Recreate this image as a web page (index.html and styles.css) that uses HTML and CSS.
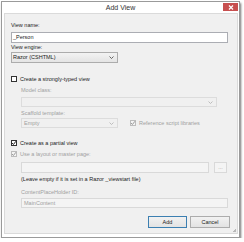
FILE: index.html
```html
<!DOCTYPE html>
<html lang="en">
<head>
    <meta charset="UTF-8">
    <title>Add View</title>
    <link rel="stylesheet" href="styles.css">
</head>
<body>
    <div class="window">
        <div class="titlebar">
            <span class="title">Add View</span>
            <span class="close">
                <svg width="6" height="5" viewBox="0 0 6 5"><path d="M1 0.5 L5 4.5 M5 0.5 L1 4.5" stroke="#fff" stroke-width="1.2"/></svg>
            </span>
        </div>

        <div class="panel">
            <div class="label first">View name:</div>
            <div class="input wide">_Person</div>

            <div class="label tight">View engine:</div>
            <div class="select engine">
                <span>Razor (CSHTML)</span>
                <svg class="arrow" width="5" height="3" viewBox="0 0 5 3"><path d="M0.5 0.5 L2.5 2.5 L4.5 0.5" fill="none" stroke="#444" stroke-width="0.8"/></svg>
            </div>

            <div class="check-row typed">
                <span class="box"></span>
                <span>Create a strongly-typed view</span>
            </div>

            <div class="indent">
                <div class="label disabled model">Model class:</div>
                <div class="select off model-input">
                    <span></span>
                    <svg class="arrow" width="5" height="3" viewBox="0 0 5 3"><path d="M0.5 0.5 L2.5 2.5 L4.5 0.5" fill="none" stroke="#b0b0b0" stroke-width="0.8"/></svg>
                </div>

                <div class="label disabled scaffold">Scaffold template:</div>
                <div class="scaffold-row">
                    <div class="select off template">
                        <span>Empty</span>
                        <svg class="arrow" width="5" height="3" viewBox="0 0 5 3"><path d="M0.5 0.5 L2.5 2.5 L4.5 0.5" fill="none" stroke="#b0b0b0" stroke-width="0.8"/></svg>
                    </div>
                    <div class="check-row disabled">
                        <span class="box off checked">
                            <svg width="6" height="6" viewBox="0 0 6 6"><path d="M1 3 L2.4 4.5 L5 1.2" fill="none" stroke="#9a9a9a" stroke-width="1"/></svg>
                        </span>
                        <span>Reference script libraries</span>
                    </div>
                </div>
            </div>

            <div class="check-row partial">
                <span class="box checked">
                    <svg width="6" height="6" viewBox="0 0 6 6"><path d="M1 3 L2.4 4.5 L5 1.2" fill="none" stroke="#222" stroke-width="1"/></svg>
                </span>
                <span>Create as a partial view</span>
            </div>

            <div class="check-row disabled layout">
                <span class="box off checked">
                    <svg width="6" height="6" viewBox="0 0 6 6"><path d="M1 3 L2.4 4.5 L5 1.2" fill="none" stroke="#9a9a9a" stroke-width="1"/></svg>
                </span>
                <span>Use a layout or master page:</span>
            </div>

            <div class="indent">
                <div class="layout-row">
                    <div class="input off layout-input"></div>
                    <div class="browse">...</div>
                </div>
                <div class="label hint">(Leave empty if it is set in a Razor _viewstart file)</div>

                <div class="label disabled cph">ContentPlaceHolder ID:</div>
                <div class="input off cph-input">MainContent</div>
            </div>

            <div class="buttons">
                <div class="button default">Add</div>
                <div class="button">Cancel</div>
            </div>
            <span class="grip"></span>
        </div>
    </div>
</body>
</html>
```

FILE: styles.css
```css
* {
    margin: 0;
    padding: 0;
    box-sizing: border-box;
}

body {
    font-family: "Liberation Sans", Arial, sans-serif;
    font-size: 5.5px;
    color: #222;
    background: #fff;
}

.window {
    width: 239px;
    height: 237px;
    margin: 1px 0 0 1px;
    border: 1px solid #9a9a9a;
    background: #fff;
    box-shadow: 1px 2px 2px rgba(0,0,0,0.55);
    display: flex;
    flex-direction: column;
}

.titlebar {
    height: 11px;
    position: relative;
    text-align: center;
}

.title {
    font-size: 7px;
    line-height: 11px;
    color: #333;
}

.close {
    position: absolute;
    right: 1px;
    top: 1px;
    width: 15px;
    height: 8px;
    background: #c74f4f;
    display: flex;
    align-items: center;
    justify-content: center;
}

.panel {
    flex: 1;
    margin: 0 1px 3px 2px;
    border: 1px solid #dadada;
    background: #f0f0f0;
    padding: 0 9px 0 6px;
    position: relative;
}

.label {
    height: 7px;
    line-height: 7px;
    white-space: nowrap;
}

.label.first { margin-top: 8px; }
.label.tight { margin-top: 1px; }

.disabled { color: #a0a0a0; }

.input, .select {
    background: #fff;
    border: 1px solid #abadb3;
    height: 11px;
    line-height: 9px;
    padding-left: 1px;
    white-space: nowrap;
}

.input.wide {
    margin-top: 3px;
    width: 217px;
}

.select {
    display: flex;
    align-items: center;
    justify-content: space-between;
    padding-right: 3px;
    background: #ececec;
}

.select.engine {
    margin-top: 1px;
    width: 107px;
    background: linear-gradient(#f3f3f3, #e4e4e4);
    border-color: #acacac;
}

.off {
    background: #f4f4f4;
    border-color: #d9d9d9;
    color: #a0a0a0;
}

.select.off { background: #f0f0f0; border-color: #dcdcdc; }

.check-row {
    display: flex;
    align-items: center;
    gap: 3px;
    height: 7px;
    white-space: nowrap;
}

.box {
    width: 6px;
    height: 6px;
    border: 1px solid #333;
    background: #fff;
    display: flex;
    align-items: center;
    justify-content: center;
}

.box svg { flex: none; }

.box.off {
    border-color: #bcbcbc;
    background: #f4f4f4;
}

.check-row.typed { margin-top: 12px; }

.indent { padding-left: 10px; }

.label.model { margin-top: 5px; }

.select.model-input {
    margin-top: 3px;
    width: 196px;
    height: 10px;
}

.label.scaffold { margin-top: 3px; }

.scaffold-row {
    margin-top: 1px;
    display: flex;
    align-items: center;
    gap: 12px;
}

.select.template {
    width: 97px;
    height: 10px;
    padding-left: 2px;
}

.check-row.partial { margin-top: 11px; color: #222; }
.check-row.layout { margin-top: 4px; }

.layout-row {
    margin-top: 5px;
    display: flex;
    gap: 5px;
}

.input.layout-input {
    width: 188px;
    height: 11px;
}

.browse {
    width: 13px;
    height: 11px;
    border: 1px solid #d9d9d9;
    background: #f4f4f4;
    color: #a0a0a0;
    text-align: center;
    line-height: 8px;
}

.label.hint { margin-top: 3px; }

.label.cph { margin-top: 6px; }

.input.cph-input {
    margin-top: 2px;
    width: 207px;
    height: 10px;
    line-height: 8px;
    padding-left: 2px;
}

.buttons {
    margin-top: 8px;
    display: flex;
    justify-content: flex-end;
    gap: 3px;
    margin-right: -2px;
}

.button {
    width: 40px;
    height: 12px;
    line-height: 10px;
    text-align: center;
    border: 1px solid #acacac;
    background: linear-gradient(#f2f2f2, #e3e3e3);
}

.button.default {
    border-color: #3c7fb1;
    width: 39px;
}

.grip {
    position: absolute;
    right: 1px;
    bottom: 1px;
    width: 4px;
    height: 4px;
    background: linear-gradient(135deg, transparent 55%, #b8b8b8 55%);
}
```
